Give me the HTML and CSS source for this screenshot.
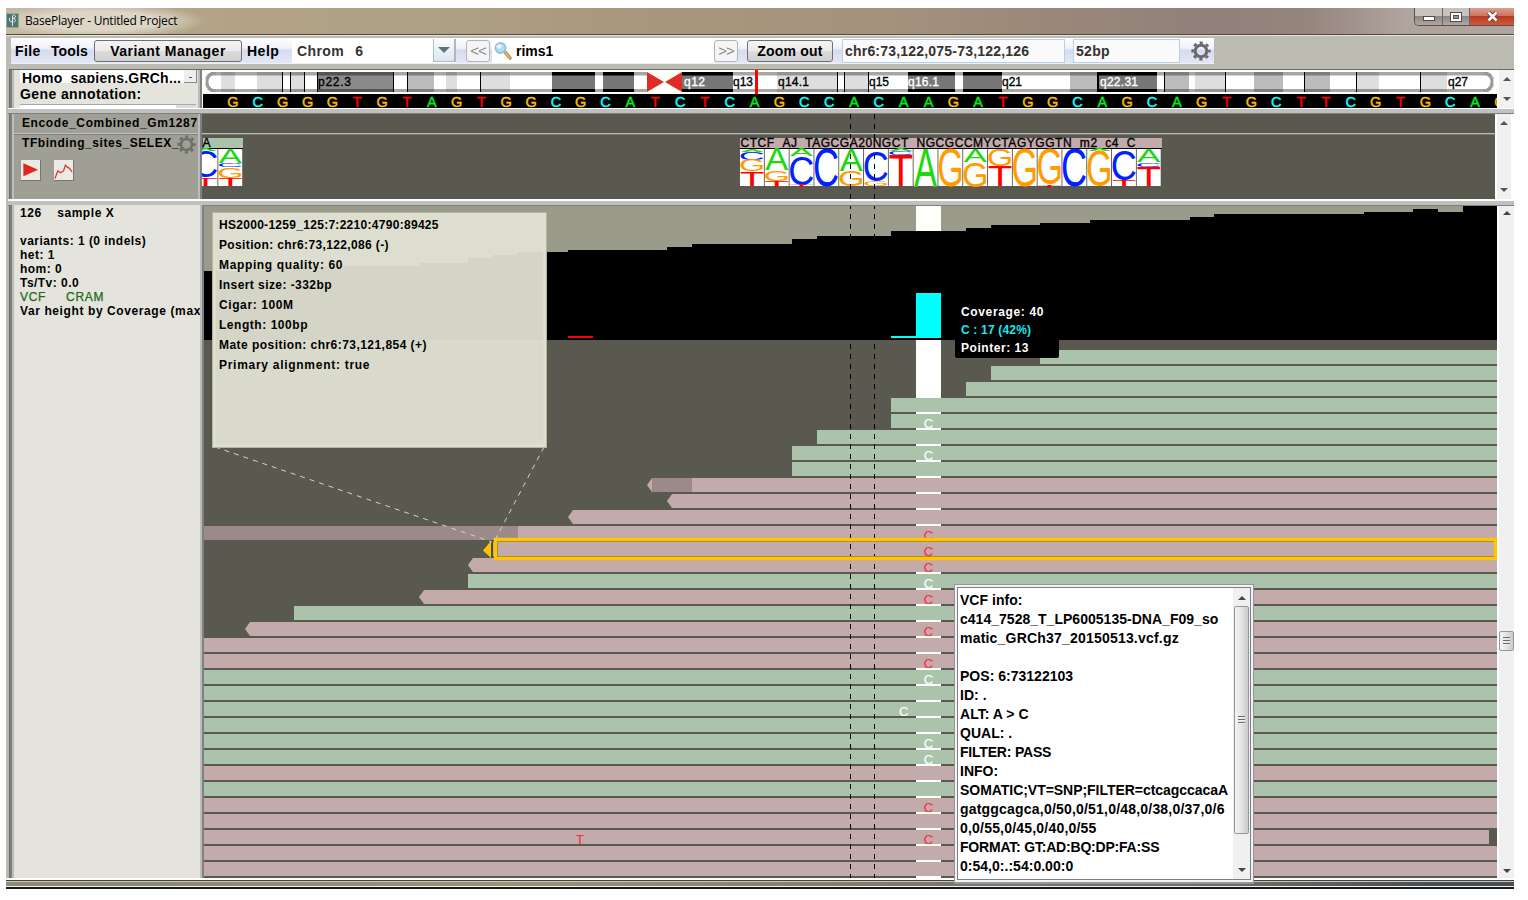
FILE: index.html
```html
<!DOCTYPE html>
<html lang="en">
<head>
<meta charset="utf-8">
<title>BasePlayer - Untitled Project</title>
<link rel="stylesheet" href="styles.css">
</head>
<body>
<div class="window">
  <header class="titlebar">
    <svg class="app-icon" width="13" height="15" viewBox="0 0 13 15"><rect x="0" y="0" width="13" height="15" fill="#50776f"/><rect x=".5" y=".5" width="12" height="14" fill="none" stroke="#8fa8a0"/><path d="M6.500 3v10M6.500 3c0-1.500 3-1.500 3 .5s-3 1.500-3 2c4 0 4 3.500 1 3.500M3.500 5v2q0 2 3 2" fill="none" stroke="#dfe9e5"/></svg>
    <span class="title-text">BasePlayer - Untitled Project</span>
    <div class="win-buttons">
      <span class="wb wb-min"><svg width="12" height="5" viewBox="0 0 12 5"><rect x=".5" y=".5" width="11" height="4" fill="#fff" stroke="#4f4a50"/></svg></span>
      <span class="wb wb-max"><svg width="12" height="10" viewBox="0 0 12 10"><rect x=".5" y=".5" width="11" height="9" fill="#fff" stroke="#4f4a50"/><rect x="3.500" y="3.500" width="5" height="3" fill="#999" stroke="#4f4a50"/></svg></span>
      <span class="wb wb-close"><svg width="13" height="11" viewBox="0 0 13 11"><path d="M2.500 1.500l8 8M10.500 1.500l-8 8" stroke="#55413f" stroke-width="4.500"/><path d="M2.500 1.500l8 8M10.500 1.500l-8 8" stroke="#fff" stroke-width="2.600"/></svg></span>
    </div>
  </header>

  <div class="frame">
    <nav class="menubar">
      <span class="menu m-file">File</span>
      <span class="menu m-tools">Tools</span>
      <button class="btn btn-variant">Variant Manager</button>
      <span class="menu m-help">Help</span>
      <div class="combo"><span class="combo-text">Chrom<span class="combo-num">6</span></span><span class="combo-arrow"><svg width="12" height="6" viewBox="0 0 12 6"><path d="M0 0h12l-6 6z" fill="#5b7386"/></svg></span></div>
      <button class="btn nav-btn nav-prev">&lt;&lt;</button>
      <div class="search">
        <svg width="20" height="20" viewBox="0 0 20 20"><path d="M12 11l5 6" stroke="#9b7a4a" stroke-width="3.500" stroke-linecap="round"/><path d="M12 11l5 6" stroke="#f0b050" stroke-width="2" stroke-linecap="round"/><circle cx="7.500" cy="7" r="5.200" fill="#a8e0fa" stroke="#9dbccb" stroke-width="1.600"/><ellipse cx="6" cy="5.500" rx="2.500" ry="2" fill="#e4f7ff"/></svg>
        <span>rims1</span>
      </div>
      <button class="btn nav-btn">&gt;&gt;</button>
      <button class="btn btn-zoom">Zoom out</button>
      <div class="field f-pos">chr6:73,122,075-73,122,126</div>
      <div class="field f-len">52bp</div>
      <svg class="gear" width="20" height="20" viewBox="0 0 20 20"><circle cx="10" cy="10" r="5.800" fill="none" stroke="#6a6a6a" stroke-width="3"/><circle cx="10" cy="10" r="8.300" fill="none" stroke="#6a6a6a" stroke-width="2.600" stroke-dasharray="3.260 3.258" stroke-dashoffset="1.630"/></svg>
    </nav>

    <section class="row row-chrom">
      <aside class="side side-chrom">
        <div class="genome"><span>Homo_sapiens.GRCh...</span><i class="drop"></i></div>
        <div class="anno-label">Gene annotation:</div>
        <div class="anno-field"><i></i></div>
      </aside>
      <div class="chrom-view">
        <svg id="ideogram" class="plot" width="1294" height="38" viewBox="203 70 1294 38"></svg>
      </div>
      <div class="scroll"><svg width="8" height="5" viewBox="0 0 8 5"><path d="M0 5h8L4 1z" fill="#555"/></svg><svg width="8" height="5" viewBox="0 0 8 5"><path d="M0 0h8L4 4z" fill="#555"/></svg></div>
    </section>
    <div class="split"></div>

    <section class="row row-tracks">
      <aside class="side side-tracks">
        <div class="track-name name-a">Encode_Combined_Gm1287</div>
        <div class="track-b">
          <div class="track-name name-b"><span>TFbinding_sites_SELEX_</span><svg width="19" height="19" viewBox="0 0 20 20"><circle cx="10" cy="10" r="5.800" fill="none" stroke="#6e6e68" stroke-width="2.600"/><circle cx="10" cy="10" r="8.300" fill="none" stroke="#6e6e68" stroke-width="2.600" stroke-dasharray="3.260 3.258" stroke-dashoffset="1.630"/></svg></div>
          <div class="tools">
            <span class="tool"><svg width="20" height="20" viewBox="0 0 20 20"><path d="M2.500 3v13.500L18 9.700z" fill="#e1261c"/></svg></span>
            <span class="tool"><svg width="20" height="20" viewBox="0 0 20 20"><path d="M1 19l3-8 3 2 3-2 2-6 2 2 2 1 3 4" fill="none" stroke="#d5362c" stroke-width="1.300"/></svg></span>
          </div>
        </div>
      </aside>
      <svg id="tracks" class="plot" width="1293" height="85" viewBox="202 114 1293 85"></svg>
      <div class="scroll"><svg width="8" height="5" viewBox="0 0 8 5"><path d="M0 5h8L4 1z" fill="#555"/></svg><svg width="8" height="5" viewBox="0 0 8 5"><path d="M0 0h8L4 4z" fill="#555"/></svg></div>
    </section>
    <div class="split split-low"></div>

    <section class="row row-reads">
      <aside class="side side-sample">
        <div class="sample-name">126&nbsp;&nbsp;&nbsp; sample X</div>
        <div>variants: 1 (0 indels)</div>
        <div>het: 1</div>
        <div>hom: 0</div>
        <div>Ts/Tv: 0.0</div>
        <div class="files"><span>VCF</span><span>CRAM</span></div>
        <div class="var-height">Var height by Coverage (max</div>
      </aside>
      <svg id="reads" class="plot" width="1293" height="672" viewBox="204 206 1293 672"></svg>
      <div class="scroll scroll-main"><svg width="8" height="5" viewBox="0 0 8 5"><path d="M0 5h8L4 1z" fill="#444"/></svg><div class="thumb thumb-main"><i></i><i></i><i></i></div><svg width="8" height="5" viewBox="0 0 8 5"><path d="M0 0h8L4 4z" fill="#444"/></svg></div>
    </section>
  </div>
  <footer class="bottom-edge"></footer>

  <div class="vcf-popup">
    <div class="vcf-inner">
      <div class="vcf-text">
        <p>VCF info:</p>
        <p>c414_7528_T_LP6005135-DNA_F09_so</p>
        <p class="wide">matic_GRCh37_20150513.vcf.gz</p>
        <p>&nbsp;</p>
        <p>POS: 6:73122103</p>
        <p>ID: .</p>
        <p>ALT: A &gt; C</p>
        <p>QUAL: .</p>
        <p class="tight">FILTER: PASS</p>
        <p>INFO:</p>
        <p class="snug">SOMATIC;VT=SNP;FILTER=ctcagccacaA</p>
        <p class="wide">gatggcagca,0/50,0/51,0/48,0/38,0/37,0/6</p>
        <p class="wide">0,0/55,0/45,0/40,0/55</p>
        <p class="tight">FORMAT: GT:AD:BQ:DP:FA:SS</p>
        <p>0:54,0:.:54:0.00:0</p>
      </div>
      <div class="vcf-scroll"><svg width="8" height="5" viewBox="0 0 8 5"><path d="M0 5h8L4 1z" fill="#444"/></svg><div class="thumb thumb-vcf"><i></i><i></i><i></i></div><svg width="8" height="5" viewBox="0 0 8 5"><path d="M0 0h8L4 4z" fill="#444"/></svg></div>
    </div>
  </div>
</div>
<script src="script.js"></script>
</body>
</html>
```
FILE: styles.css
```css
* { box-sizing: border-box; }
body {
  margin: 0;
  width: 1528px;
  height: 900px;
  overflow: hidden;
  background: #fff;
  font-family: "Liberation Sans", Arial, sans-serif;
  font-weight: bold;
  color: #000;
}
.window {
  position: relative;
  width: 1508px;
  height: 881px;
  margin: 8px 0 0 6px;
  display: flex;
  flex-direction: column;
}
.titlebar {
  display: flex;
  align-items: flex-start;
  height: 28px;
  padding-top: 5px;
  border-bottom: 1px solid #e8e4dc;
  background:
    linear-gradient(#0000 26px, #51483f 26px),
    radial-gradient(ellipse 108px 17px at 92px 13px, #ddd6c6 0 55%, #ddd6c600 100%),
    linear-gradient(90deg, #c4b9a2 0, #b3a487 190px, #aea085 450px, #a8987e 600px, #a3937d 880px, #9c8b79 1000px, #91807a 1200px, #94857d 1300px, #b0a49e 1400px);
}
.app-icon { flex: none; }
.title-text {
  margin: -1px 0 0 6px;
  font: 12px/18px "Open Sans", "Noto Sans", sans-serif;
  letter-spacing: -.22px;
}
.win-buttons {
  display: flex;
  margin: -5px 0 0 auto;
  width: 100px;
  height: 18px;
  border: solid #5a4d4a;
  border-width: 0 0 1px 1px;
  border-radius: 0 0 0 5px;
  overflow: hidden;
}
.wb { display: flex; align-items: center; justify-content: center; border-left: 1px solid #6d5f5b; background: linear-gradient(#c9c2be 0 45%, #8f8681 50%, #b1a8a3); }
.wb-min { width: 27px; border-left: 0; padding-top: 4px; }
.wb-max { width: 27px; }
.wb-close { flex: 1; background: linear-gradient(#dba093 0, #cf7460 45%, #b83a22 50%, #cf5a38); }

.frame { height: 842px; border-left: 2px solid #bcbbb1; background: #bcbbb1; display: flex; flex-direction: column; padding-top: 2px; }
.menubar {
  display: flex;
  align-items: center;
  width: 1203px;
  height: 26px;
  margin: 0 0 5px 3px;
  border-bottom: 1px solid #eef0f6;
  background: linear-gradient(#fdfdff, #f0f2fa 40%, #d5dbf0 50%, #e3e7f6);
  font-size: 14px;
  flex: none;
}
.menu { letter-spacing: .1px; }
.m-file { width: 36px; margin-left: 4px; letter-spacing: .4px; }
.m-tools { width: 43px; }
.m-help { width: 45px; margin-left: 5px; letter-spacing: .5px; }
.btn {
  height: 22px;
  padding: 0;
  border: 1px solid #707070;
  border-radius: 3px;
  background: linear-gradient(#f4f4f4, #ebebeb 48%, #dcdcdc 52%, #cfcfcf);
  font: bold 14px "Liberation Sans", Arial, sans-serif;
  color: #000;
}
.btn-variant { width: 148px; letter-spacing: .5px; }
.nav-btn { width: 24px; background: #f5f5f5; border-color: #b0b5bb; color: #8a8a8a; font-weight: normal; font-size: 15px; letter-spacing: -1px; line-height: 16px; }
.btn-zoom { width: 86px; margin-left: 9px; letter-spacing: .2px; }
.combo { display: flex; width: 164px; height: 24px; background: #fff; color: #333; align-items: center; justify-content: space-between; padding-left: 5px; letter-spacing: .4px; }
.combo-num { margin-left: 11px; }
.combo-arrow { display: flex; align-items: center; justify-content: center; width: 23px; height: 23px; background: linear-gradient(#fbfcfd, #dde6ee); border: solid #a8b9c9; border-width: 0 2px 1px 1px; }
.nav-prev { margin: 0 2px 0 10px; }
.search { display: flex; align-items: center; width: 222px; height: 25px; background: #fff; padding-left: 1px; gap: 3px; }
.field { display: flex; align-items: center; height: 24px; border: 1px solid #b5d0e8; background: #fafafa; color: #333; padding-left: 2px; }
.f-pos { width: 223px; margin-left: 9px; letter-spacing: .2px; }
.f-len { width: 107px; margin-left: 8px; letter-spacing: .3px; }
.gear { margin-left: 11px; }

.row { display: flex; margin-left: 1px; flex: none; }
.side { overflow: hidden; flex: none; border: solid #bcbcbc; border-width: 0 2px; box-shadow: 2px 0 0 #808080; white-space: nowrap; }
.row::before { content: ""; width: 3px; flex: none; background: linear-gradient(90deg, #6e6e68 1px, #808080 1px); }
.plot { display: block; flex: none; }
.row-chrom { height: 39px; border-top: 1px solid #6c6a67; background: #fffffa; }
.side-chrom { width: 188px; background: #e4e4dc; padding-left: 6px; font-size: 14px; margin-right: 3px; }
.genome { display: flex; justify-content: space-between; width: 177px; height: 13px; overflow: hidden; background: #fff; padding-left: 2px; line-height: 16px; letter-spacing: .22px; }
.drop { width: 13px; height: 13px; background: #eee linear-gradient(#555, #555) 5px 7px / 3px 1px no-repeat; border: solid #888; border-width: 0 1px 1px 0; }
.anno-label { line-height: 23px; height: 21px; letter-spacing: .4px; }
.anno-field { height: 4px; width: 176px; background: #fff; border-top: 1px solid #aaa; }
.anno-field i { display: block; width: 20px; height: 3px; background: #ddd; margin-left: auto; }
.split { height: 6px; flex: none; background: linear-gradient(#fff 1px, #c0c0c0 1px 5px, #808080 5px); }
.split-low { height: 7px; background: linear-gradient(#fff 2px, #c0c0c0 2px 6px, #808080 6px); }
.row-tracks { height: 85px; background: #fff; }
.side-tracks { width: 188px; background: #a09f95; margin-right: 2px; font-size: 12px; }
.track-name { padding-left: 8px; letter-spacing: .62px; white-space: nowrap; }
.name-a { height: 20px; line-height: 19px; border-bottom: 1px solid #c0c0c0; }
.track-b { border-top: 1px solid #808080; }
.name-b { display: flex; height: 19px; line-height: 16px; letter-spacing: .56px; }
.name-b svg { margin-left: -2px; flex: none; }
.tools { display: flex; gap: 13px; padding: 6px 0 0 7px; }
.tool { display: flex; width: 20px; height: 21px; background: #eceae4; border: solid #77766f; border-width: 0 1px 1px 0; }
.row-reads { height: 672px; background: #fff; }
.side-sample { width: 190px; margin: -1px 2px 0 0; background: #e4e4dc; padding-left: 6px; font-size: 12px; line-height: 14px; letter-spacing: .46px; }
.sample-name { padding-top: 1px; margin-bottom: 14px; letter-spacing: .55px; }
.files { display: flex; gap: 20px; color: #1a6a1a; font-weight: normal; letter-spacing: .7px; -webkit-text-stroke: .25px #1a6a1a; }
.var-height { letter-spacing: .6px; width: 180px; overflow: hidden; }

.scroll { display: flex; flex-direction: column; align-items: center; justify-content: space-between; width: 16px; background: #f0f0f0; border-left: 2px solid #fff; padding: 6px 0; margin-right: auto; }
.row-chrom .scroll { width: 17px; background: #f2f2f2; }
.scroll-main { width: 17px; padding: 4px 0; }
.thumb { display: flex; flex-direction: column; align-items: center; justify-content: center; gap: 1px; border: 1px solid #979797; border-radius: 2px; background: linear-gradient(90deg, #f4f4f4, #e4e4e6 50%, #c9cacd); }
.thumb i { width: 7px; height: 2px; background: #6b6b6b; border-bottom: 1px solid #eee; }
.thumb-main { width: 15px; height: 20px; margin-top: 198px; }
.bottom-edge {
  height: 11px;
  flex: none;
  background:
    linear-gradient(#fff 2px, #45443c 2px 3px, #c8c8bc 3px 4px, #0000 4px 8px, #eee 8px 9px, #161a1c 9px),
    linear-gradient(90deg, #8f8a72, #8a8773 130px, #9c9276 500px, #7c776a 930px, #6b6964 1250px, #484e58 1420px);
}

.vcf-popup { position: absolute; left: 948px; top: 576px; width: 300px; height: 300px; border: 1px solid #979797; border-bottom-width: 2px; background: #f2f2f6; padding: 2px; }
.vcf-inner { display: flex; height: 100%; border: 1px solid #7d7f88; background: #fff; }
.vcf-text { flex: 1; padding: 3px 0 0 2px; font-size: 14px; line-height: 19px; white-space: nowrap; }
.vcf-text p { margin: 0; letter-spacing: .02px; }
.vcf-text .wide { letter-spacing: .2px; }
.vcf-text .snug { letter-spacing: -.04px; }
.vcf-text .tight { letter-spacing: -.2px; }
.vcf-scroll { display: flex; flex-direction: column; align-items: center; justify-content: space-between; width: 17px; background: #f0f0f0; padding: 7px 0 6px; }
.thumb-vcf { width: 15px; height: 228px; margin-top: -28px; }

.t12 { font: bold 12px "Liberation Sans", Arial, sans-serif; }
.lab { font: 12px "Liberation Sans", Arial, sans-serif; stroke-width: .35; }
.seq { font: 14.5px "Liberation Sans", Arial, sans-serif; text-anchor: middle; stroke-width: .45; }
.base { font: 13px "Liberation Sans", Arial, sans-serif; text-anchor: middle; stroke-width: .15; }
.logo { font: 100px "Liberation Sans", Arial, sans-serif; }
```
FILE: script.js
```javascript
const NS = 'http://www.w3.org/2000/svg';
function add(parent, tag, attrs, text) {
  const e = document.createElementNS(NS, tag);
  for (const k in attrs) e.setAttribute(k, attrs[k]);
  if (text !== undefined) e.textContent = text;
  parent.appendChild(e);
  return e;
}
const rect = (p, x, y, w, h, fill, more) => add(p, 'rect', { x, y, width: w, height: h, fill, ...more });

/* Chromosome bands: [x1, x2, kind] */
const ideo = document.getElementById('ideogram');
const shades = {
  w: ['#a6a6a6', '#ffffff'], l: ['#929292', '#dedede'],
  m: ['#7d7d7d', '#bcbcbc'], d: ['#545454', '#8a8a8a'], b: ['#000000', '#777777']
};
const bands = [
  [205, 221, 'w'], [221, 235, 'l'], [235, 257, 'w'], [257, 282, 'l'], [283, 290, 'w'], [291, 304, 'l'],
  [305, 317, 'w'], [318, 393, 'd'], [394, 407, 'w'], [408, 434, 'm'], [434, 446, 'w'], [446, 457, 'l'],
  [457, 480, 'w'], [481, 510, 'l'], [510, 552, 'w'], [552, 595, 'b'], [595, 603, 'w'], [603, 634, 'b'],
  [634, 647, 'w'], [682, 733, 'b'], [733, 777, 'w'], [777, 837, 'l'], [838, 844, 'w'], [845, 868, 'l'],
  [869, 908, 'w'], [908, 955, 'b'], [955, 963, 'w'], [963, 1002, 'b'], [1002, 1070, 'w'], [1070, 1097, 'm'],
  [1099, 1157, 'b'], [1157, 1164, 'w'], [1165, 1189, 'm'], [1189, 1195, 'w'], [1195, 1225, 'l'],
  [1226, 1254, 'w'], [1254, 1283, 'm'], [1283, 1304, 'w'], [1305, 1330, 'm'], [1330, 1356, 'w'],
  [1357, 1379, 'l'], [1379, 1420, 'w'], [1421, 1447, 'l'], [1447, 1494, 'w']
];
rect(ideo, 203, 70, 1294, 24, '#fffffa');
const clip = add(add(ideo, 'defs', {}), 'clipPath', { id: 'cap' });
rect(clip, 205, 72, 1289, 20, '#000', { rx: 9 });
const g = add(ideo, 'g', { 'clip-path': 'url(#cap)' });
rect(g, 205, 72, 442, 20, '#000');
rect(g, 682, 72, 812, 20, '#000');
for (const [a, b, k] of bands) {
  rect(g, a, 72, b - a, 20, shades[k][0]);
  rect(g, a, 75.5, b - a, 13.5, shades[k][1]);
}
add(ideo, 'path', { d: 'M216 73.500h-3q-6 2-6 8.500t6 8.500h3', fill: 'none', stroke: '#999', 'stroke-width': 3 });
add(ideo, 'path', { d: 'M1483 73.500h3q6 2 6 8.500t-6 8.500h-3', fill: 'none', stroke: '#999', 'stroke-width': 3 });
add(ideo, 'path', { d: 'M647 72l17 10-17 10zM682 72l-17 10 17 10z', fill: '#dd2d26' });
rect(ideo, 755, 70, 3, 24, '#f00');
const labels = [
  ['p22.3', 318, 33, '#000'], ['q12', 684, 21, '#fff'], ['q13', 733, 20, '#000'], ['q14.1', 778, 31, '#000'],
  ['q15', 869, 20, '#000'], ['q16.1', 908, 31, '#fff'], ['q21', 1002, 20, '#000'], ['q22.31', 1100, 38, '#fff'],
  ['q27', 1448, 20, '#000']
];
for (const [t, x, w, c] of labels)
  add(ideo, 'text', { x, y: 86, fill: c, stroke: c, class: 'lab', textLength: w }, t);

/* Reference sequence */
const seqColor = { A: '#00ee1c', C: '#1ff', G: '#fdbd02', T: '#f00' };
const seq = 'GCGGGTGTAGTGGCGCATCTCAGCCACAAGATGGCAGCAGTGCTTCGTGCAG';
rect(ideo, 203, 94, 1294, 14, '#000');
[...seq].forEach((b, i) =>
  add(ideo, 'text', { x: 233 + 24.84 * i, y: 106.5, class: 'seq', fill: seqColor[b], stroke: seqColor[b] }, b));

/* Binding-site tracks */
const tr = document.getElementById('tracks');
rect(tr, 202, 114, 1293, 85, '#5a5950');
rect(tr, 202, 133, 1293, 1.3, '#bdbdbd');
rect(tr, 203, 138, 40, 10, '#abc3ab');
rect(tr, 740, 138, 422, 10, '#c2abaa');
rect(tr, 203, 148, 40, 1, '#000');
rect(tr, 740, 148, 422, 1, '#000');
add(tr, 'text', { x: 202.5, y: 147, class: 'lab', stroke: '#000' }, 'A');
add(tr, 'text', { x: 740.5, y: 147, class: 'lab', stroke: '#000', textLength: 395 },
  'CTCF\u00a0\u00a0AJ\u00a0\u00a0TAGCGA20NGCT\u00a0\u00a0NGCGCCMYCTAGYGGTN\u00a0\u00a0m2\u00a0\u00a0c4\u00a0\u00a0C');

const logoColor = { A: '#1cd80e', C: '#0022ff', G: '#ff9c00', T: '#ff0000' };
const ink = { A: [0, 66.7, 68.8, 0], C: [5, 68.7, 70.5, 1], G: [5, 72.5, 70.5, 1], T: [2, 59, 68.8, 0] };
function logoLetter(ch, x, y1, y2) {
  const [l, r, cap, over] = ink[ch];
  const sx = 23 / (r - l), sy = (y2 - y1) / (cap + over);
  add(tr, 'text', {
    class: 'logo', fill: logoColor[ch],
    transform: `translate(${x + .5 - l * sx} ${y2 - over * sy}) scale(${sx} ${sy})`
  }, ch);
}
const drawLogo = (x0, pitch, cols) => cols.forEach((col, i) => {
  const x = x0 + i * pitch;
  rect(tr, x, 149, 23.9, 37, '#fff');
  for (const [ch, a, b] of col) logoLetter(ch, x, a, b);
});
drawLogo(740, 24.8, [
  [['A', 149, 152], ['C', 152, 160], ['G', 160, 171.5], ['T', 172, 186]],
  [['A', 149, 170], ['G', 170, 181], ['T', 181, 187]],
  [['A', 149, 156], ['C', 156, 185.5], ['T', 185, 187]],
  [['C', 149, 187]],
  [['A', 149, 171], ['G', 171, 186.5]],
  [['C', 150, 181], ['G', 181, 186.5]],
  [['A', 149, 151], ['C', 151, 155], ['T', 155, 186]],
  [['A', 149, 187]],
  [['G', 149, 187]],
  [['A', 149, 162], ['G', 162, 187]],
  [['G', 149, 166], ['T', 166, 186]],
  [['G', 149, 187]],
  [['G', 149, 185], ['T', 185, 187.5]],
  [['C', 149, 187]],
  [['A', 149, 151], ['G', 151, 187]],
  [['C', 149, 180], ['T', 180, 186]],
  [['A', 149, 162], ['C', 163, 167], ['T', 167.5, 186]]
]);
drawLogo(193.5, 24.8, [
  [['A', 149, 151], ['C', 151, 177.5], ['T', 179, 186]],
  [['A', 149, 162.5], ['C', 163, 167], ['G', 167, 178], ['T', 178, 186]]
]);

/* Coverage profile and aligned reads */
const rd = document.getElementById('reads');
rect(rd, 204, 206, 1293, 672, '#5a5950');
rect(rd, 204, 206, 1293, 134, '#9b9b8b');
rect(rd, 916, 206, 25, 40, '#fffffa');
rect(rd, 916, 340, 25, 538, '#fff');
for (const x of [850.5, 874.5])
  add(rd, 'path', { d: `M${x} 204V340`, stroke: '#000', 'stroke-dasharray': '5 5' });
const cov = [
  [204, 271], [245, 268], [294, 266], [419, 263], [468, 258], [493, 255], [518, 252], [568, 250], [667, 247],
  [692, 244], [792, 239], [817, 236], [891, 231], [966, 228], [991, 225], [1040, 223], [1090, 220],
  [1190, 217], [1214, 214], [1364, 212], [1413, 209], [1438, 212], [1463, 206]
];
add(rd, 'path', { d: 'M204 340' + cov.map(([x, y]) => `H${x}V${y}`).join('') + 'H1497V340z' });
rect(rd, 568, 336, 25, 2, '#f00');
rect(rd, 891, 336, 25, 2, '#0ff');
rect(rd, 916, 293, 25, 45, '#0ff');

const green = '#abc3ab', pink = '#c2abaa', shade = '#9b8a89';
const reads = [
  [1040, 'f'], [991, 'f'], [966, 'f'], [891, 'f'], [891, 'f', 928.5], [817, 'f'], [792, 'f', 928.5], [792, 'f'],
  [647, 'r'], [667, 'r'], [568, 'r'], [204, 'R', 928.5], [493, 'R', 928.5], [468, 'r', 928.5], [468, 'f', 928.5],
  [419, 'r', 928.5], [294, 'f'], [245, 'r', 928.5], [204, 'R'], [204, 'R', 928.5], [204, 'f', 928.5], [204, 'f'],
  [204, 'f', 903.7], [204, 'f'], [204, 'f', 928.5], [204, 'f', 928.5], [204, 'R'], [204, 'f'],
  [204, 'R', 928.5], [204, 'R'], [204, 'R', 928.5], [204, 'R'], [204, 'R']
];
const base = (ch, x, y, c) => add(rd, 'text', { x, y, class: 'base', fill: c, stroke: c }, ch);
reads.forEach(([x, dir, variant], i) => {
  const y = 350 + 16 * i, end = i === 30 ? 1489 : 1497;
  const fill = dir === 'f' ? green : pink;
  if (dir === 'r') add(rd, 'path', { d: `M${x} ${y + 7}l5-7H${end}v14H${x + 5}z`, fill });
  else rect(rd, x, y, end - x, 14, fill);
  if (i === 8) rect(rd, 652, y, 40, 14, shade);
  if (i === 11) rect(rd, 204, y, 314, 14, shade);
  if (variant) base('C', variant, y + 13.7, dir === 'f' ? '#fff' : '#ff2a44');
});
base('T', 580, 843.7, '#ff2a44');

for (const x of [850.5, 874.5]) {
  add(rd, 'path', { d: `M${x} 344V878`, stroke: '#000', 'stroke-dasharray': '5 5' });
  add(tr, 'path', { d: `M${x} 114V199`, stroke: '#000', 'stroke-dasharray': '5 5' });
}

/* Selected read */
rect(rd, 495.5, 539.5, 1000, 19, 'none', { stroke: '#ffc600', 'stroke-width': 3.5 });
rect(rd, 497.5, 541.5, 998, 15, 'none', { stroke: '#b08e28' });
rect(rd, 1494, 538, 3, 22, '#ffc600');
add(rd, 'path', { d: 'M491 541v17l-8-7.500z', fill: '#ffc600' });
add(rd, 'path', { d: 'M492 541v17', stroke: '#3f3f3a' });
add(rd, 'path', { d: 'M215 447L492 542M544 447L494 542', stroke: '#d3d4c4', fill: 'none', 'stroke-dasharray': '5 5' });

/* Read details */
rect(rd, 212.5, 212.5, 334, 235, '#e1e2d3', { 'fill-opacity': .94, stroke: '#b4b5a3' });
rect(rd, 214.5, 214.5, 330, 231, 'none', { stroke: '#e0e1cf', 'stroke-width': 2 });
[
  ['HS2000-1259_125:7:2210:4790:89425', 219.5], ['Position: chr6:73,122,086 (-)', 169.5], ['Mapping quality: 60', 123.5],
  ['Insert size: -332bp', 112.5], ['Cigar: 100M', 74], ['Length: 100bp', 88.5],
  ['Mate position: chr6:73,121,854 (+)', 207.5], ['Primary alignment: true', 150.5]
].forEach(([t, w], i) => add(rd, 'text', { x: 219, y: 228.5 + 20 * i, class: 't12', textLength: w }, t));

/* Coverage tooltip */
rect(rd, 955, 302, 104, 56, '#000', { rx: 2 });
[['Coverage: 40', 82.5, '#fff'], ['C : 17 (42%)', 70, '#18e8f0'], ['Pointer: 13', 67.5, '#fff']]
  .forEach(([t, w, c], i) => add(rd, 'text', { x: 961, y: 315.5 + 18 * i, class: 't12', fill: c, textLength: w }, t));
```
